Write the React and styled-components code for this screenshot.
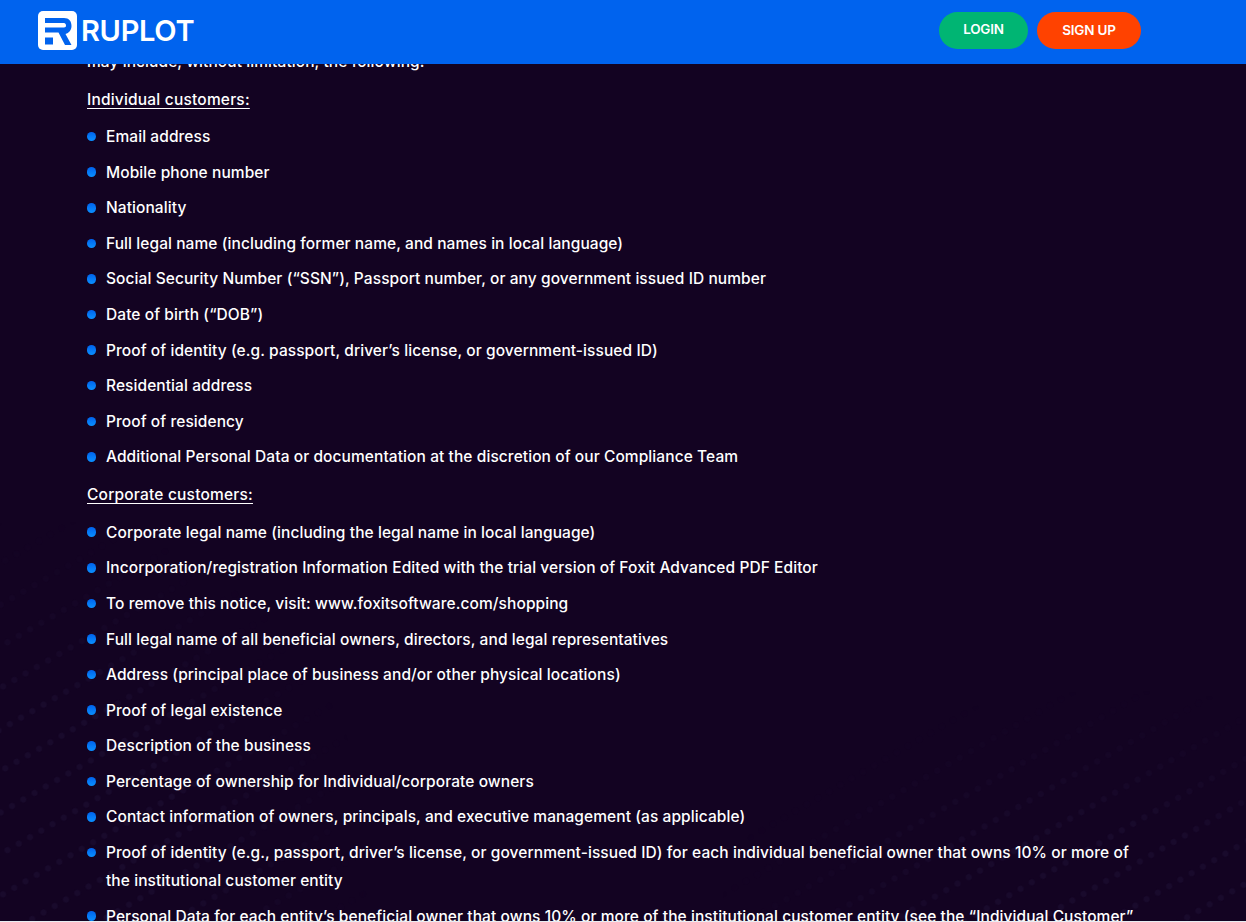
import React from "react";
import styled, { createGlobalStyle } from "styled-components";

const Global = createGlobalStyle`
  html, body { margin: 0; padding: 0; height: 100%; overflow: hidden; background: #e8edf2; }
  * { box-sizing: border-box; }
`;
const Page = styled.div`
  height: 921px; overflow: hidden; position: relative; background: #130322;
  font-family: "Inter", "Open Sans", sans-serif; color: #fff;
`;
const Texture = styled.div`
  position: absolute; inset: 0; overflow: hidden; pointer-events: none;
  -webkit-mask-image: radial-gradient(ellipse 330px 340px at 40px 860px, #000 45%, transparent 100%), radial-gradient(ellipse 400px 230px at 1120px 920px, #000 40%, transparent 100%);
  mask-image: radial-gradient(ellipse 330px 340px at 40px 860px, #000 45%, transparent 100%), radial-gradient(ellipse 400px 230px at 1120px 920px, #000 40%, transparent 100%);
  &::before {
    content: ""; position: absolute; left: -400px; top: -400px; width: 2100px; height: 1800px;
    transform: rotate(-30deg);
    background-image: radial-gradient(circle, #190a2c 2.6px, transparent 3.6px);
    background-size: 13px 36px;
  }
`;
const Header = styled.header`
  position: absolute; top: 0; left: 0; right: 0; height: 64px; background: #0063ee; z-index: 2;
  display: flex; align-items: center; justify-content: space-between; padding: 0 105px 0 38px;
`;
const Brand = styled.div`display: flex; align-items: center; gap: 4px; margin-top: -3px;`;
const BrandName = styled.span`
  font-family: "Inter", sans-serif; font-size: 29px; font-weight: 600; letter-spacing: -0.3px; color: #fff; line-height: 1;
`;
const Actions = styled.div`display: flex; gap: 9px; margin-top: -3px;`;
const Pill = styled.button`
  height: 37px; width: ${p => p.$w}px; border: 0; border-radius: 19px; background: ${p => p.$bg};
  color: #fff; font-family: "Inter", sans-serif; font-weight: 600; font-size: 13.5px; letter-spacing: -0.2px;
  padding: 0 0 ${p => p.$lift}px;
`;
const Content = styled.main`
  position: relative; padding: 48.2px 105px 0 87px; font-size: 15.5px; font-weight: 550; line-height: 28px; letter-spacing: 0.08px;
`;
const Para = styled.p`margin: 0 0 9.4px;`;
const Heading = styled.p`margin: 0 0 9.5px; text-decoration: underline; text-underline-offset: 3px; letter-spacing: 0.2px;`;
const List = styled.ul`list-style: none; margin: 0 0 9.8px; padding: 0;`;
const Item = styled.li`
  position: relative; padding-left: 19px; margin-bottom: 7.6px;
  &::before {
    content: ""; position: absolute; left: -0.25px; top: 8.75px; width: 9.5px; height: 9.5px; border-radius: 50%;
    background: linear-gradient(180deg, #0063ee, #0a90ff);
  }
`;

const Logo = () => (
  <svg width="39" height="39" viewBox="0 0 39 39" aria-hidden="true">
    <rect width="39" height="39" rx="5" fill="#fff" />
    <path d="M7 7H26C31 7 33.5 10 33.5 15C33.5 19 31 22 27.5 23L33.5 34H27L20.5 21.5H7V16.5H26C27.5 16.5 28 15.5 28 14.5C28 13 27 12 26 12H7Z" fill="#0063ee" />
    <rect x="7" y="26.5" width="8" height="7" fill="#0063ee" />
  </svg>
);

const individual = [
  "Email address",
  "Mobile phone number",
  "Nationality",
  "Full legal name (including former name, and names in local language)",
  "Social Security Number (“SSN”), Passport number, or any government issued ID number",
  "Date of birth (“DOB”)",
  "Proof of identity (e.g. passport, driver’s license, or government-issued ID)",
  "Residential address",
  "Proof of residency",
  "Additional Personal Data or documentation at the discretion of our Compliance Team",
];
const corporate = [
  "Corporate legal name (including the legal name in local language)",
  "Incorporation/registration Information Edited with the trial version of Foxit Advanced PDF Editor",
  "To remove this notice, visit: www.foxitsoftware.com/shopping",
  "Full legal name of all beneficial owners, directors, and legal representatives",
  "Address (principal place of business and/or other physical locations)",
  "Proof of legal existence",
  "Description of the business",
  "Percentage of ownership for Individual/corporate owners",
  "Contact information of owners, principals, and executive management (as applicable)",
  "Proof of identity (e.g., passport, driver’s license, or government-issued ID) for each individual beneficial owner that owns 10% or more of the institutional customer entity",
  "Personal Data for each entity’s beneficial owner that owns 10% or more of the institutional customer entity (see the “Individual Customer” section above for details on what Personal Data we collect)",
];

export default function App() {
  return (
    <Page>
      <Global />
      <Texture />
      <Header>
        <Brand><Logo /><BrandName>RUPLOT</BrandName></Brand>
        <Actions>
          <Pill $bg="#00b573" $w={89} $lift={3}>LOGIN</Pill>
          <Pill $bg="#ff4200" $w={104} $lift={1}>SIGN UP</Pill>
        </Actions>
      </Header>
      <Content>
        <Para>may include, without limitation, the following:</Para>
        <Heading>Individual customers:</Heading>
        <List>{individual.map(t => <Item key={t}>{t}</Item>)}</List>
        <Heading>Corporate customers:</Heading>
        <List>{corporate.map(t => <Item key={t}>{t}</Item>)}</List>
      </Content>
    </Page>
  );
}
